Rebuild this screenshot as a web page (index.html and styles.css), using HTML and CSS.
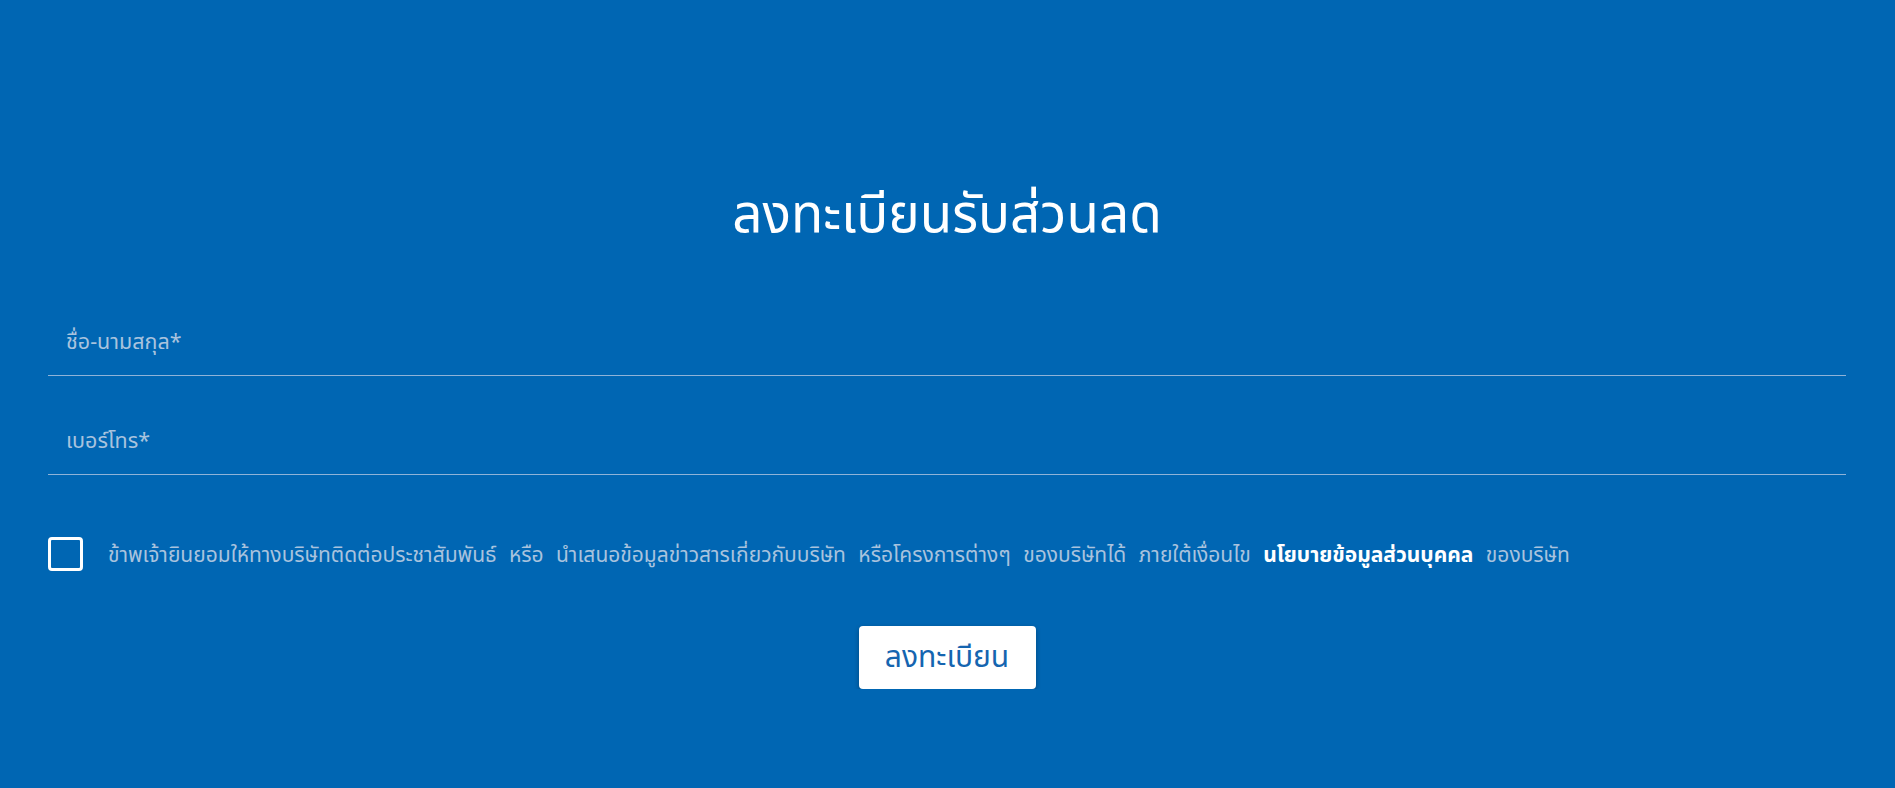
FILE: index.html
```html
<!DOCTYPE html>
<html lang="th">
<head>
  <meta charset="UTF-8">
  <meta name="viewport" content="width=device-width, initial-scale=1.0">
  <title>ลงทะเบียนรับส่วนลด</title>
  <link rel="stylesheet" href="styles.css">
</head>
<body>
  <section class="register">
    <h1>ลงทะเบียนรับส่วนลด</h1>

    <form class="register-form" onsubmit="return false">
      <div class="field">
        <input type="text" name="fullname" placeholder="ชื่อ-นามสกุล*">
      </div>
      <div class="field">
        <input type="tel" name="phone" placeholder="เบอร์โทร*">
      </div>

      <!-- ยอมรับเงื่อนไข -->
      <label class="consent">
        <input type="checkbox" name="consent">
        <span class="box"></span>
        <span class="consent-text">ข้าพเจ้ายินยอมให้ทางบริษัทติดต่อประชาสัมพันธ์ หรือ นำเสนอข้อมูลข่าวสารเกี่ยวกับบริษัท หรือโครงการต่างๆ ของบริษัทได้ ภายใต้เงื่อนไข <a href="#">นโยบายข้อมูลส่วนบุคคล</a> ของบริษัท</span>
      </label>

      <div class="actions">
        <button type="submit" class="submit-btn">ลงทะเบียน</button>
      </div>
    </form>
  </section>
</body>
</html>
```

FILE: styles.css
```css
body {
  margin: 0;
  padding: 0;
  background: #0066b3;
  font-family: "Noto Sans Thai", "Noto Sans", sans-serif;
  color: white;
}
.register {
  padding: 0 49px 0 48px;
}
.register h1 {
  margin: 0;
  padding-top: 185px;
  font-size: 53px;
  font-weight: 400;
  line-height: 62px;
  text-align: center;
}
.register-form {
  margin-top: 63px;
}
.field + .field {
  margin-top: 33px;
}
.field input {
  display: block;
  width: 100%;
  box-sizing: border-box;
  height: 66px;
  padding: 0 18px;
  background: transparent;
  border: none;
  border-bottom: 1px solid #8fb3d8;
  color: white;
  font-family: inherit;
  font-size: 21.5px;
  outline: none;
}
.field input::placeholder {
  color: #a9c3de;
}
.consent {
  display: flex;
  align-items: center;
  gap: 25px;
  margin-top: 61px;
  cursor: pointer;
}
.consent input {
  display: none;
}
.consent .box {
  flex: none;
  width: 29px;
  height: 28px;
  border: 3px solid white;
  border-radius: 4px;
}
.consent-text {
  padding-top: 4px;
  font-size: 21px;
  color: #a9c3de;
  word-spacing: 7px;
}
.consent-text a {
  color: white;
  font-weight: 700;
  text-decoration: none;
  word-spacing: 0;
}
.actions {
  display: flex;
  justify-content: center;
  margin-top: 55px;
}
.submit-btn {
  width: 177px;
  height: 63px;
  background: white;
  border: none;
  border-radius: 4px;
  box-shadow: 0 2px 5px rgba(0,0,0,0.3);
  color: #1565b0;
  font-family: inherit;
  font-size: 30px;
  cursor: pointer;
}
```
